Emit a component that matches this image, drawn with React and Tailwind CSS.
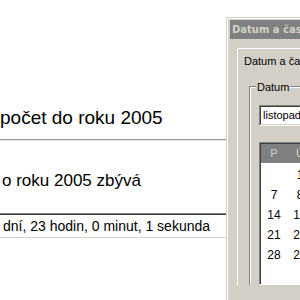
import React from "react";

const weeks = [
    ["", "1", "2"],
    ["7", "8", "9"],
    ["14", "15", "16"],
    ["21", "22", "23"],
    ["28", "29", "30"],
    ["", "", ""],
];

const dayNames = ["P", "Ú", "S", "Č", "P", "S", "N"];

const App = () => {
    return (
        <div className="w-[300px] h-[300px] overflow-hidden bg-white flex font-['Liberation_Sans',Arial,sans-serif] text-black">
            {/* countdown text */}
            <div className="w-[226px] shrink-0 flex flex-col">
                <p className="pt-[107px] text-[19px] leading-[22px] whitespace-nowrap">
                    počet do roku 2005
                </p>
                <div className="mt-[10px] h-[1px] bg-[#9a9a9a]" />
                <div className="h-[1px] bg-[#e6e6e6]" />
                <p className="mt-[30px] pl-[2px] text-[17px] leading-[20px] whitespace-nowrap">
                    o roku 2005 zbývá
                </p>
                <div className="mt-[22px] border-t border-[#808080]">
                    <div className="border-t border-b border-t-[#404040] border-b-[#d4d0c8]">
                        <p className="pl-[3px] h-[22px] text-[14px] leading-[22px] whitespace-nowrap">
                            dní, 23 hodin, 0 minut, 1 sekunda
                        </p>
                    </div>
                </div>
            </div>

            {/* Datum a čas dialog */}
            <div className="flex-1 min-w-0 overflow-hidden pt-[17px]">
                <div className="border-t border-l border-[#d4d0c8] h-full">
                    <div className="border-t border-l border-white bg-[#d4d0c8] pt-[1px] pl-[2px] h-full">
                        <div className="h-[19px] bg-[#808080] pl-[2px] font-['DejaVu_Sans',sans-serif] text-[10px] font-bold leading-[19px] text-[#d4d0c8] whitespace-nowrap">
                            Datum a čas – vlastnosti
                        </div>
                        <div className="pl-[7px] pt-[9px] text-[11px] whitespace-nowrap">
                            <div className="border-t border-l border-white w-[200px]">
                                <div className="pl-[6px] pt-[6px] leading-[13px]">Datum a čas</div>
                                <div className="pl-[11px] pt-[18px]">
                                    <div className="border-t border-l border-[#808080]">
                                        <div className="border-t border-l border-white">
                                            <div className="-mt-[7px] ml-[5px] w-fit px-[1px] bg-[#d4d0c8] leading-[13px]">
                                                Datum
                                            </div>
                                            <div className="mt-[11px] ml-[8px] border-t border-l border-b border-t-[#808080] border-l-[#808080] border-b-white">
                                                <div className="border-t border-l border-b border-t-[#404040] border-l-[#404040] border-b-[#d4d0c8] bg-white h-[19px] pl-[2px] leading-[17px]">
                                                    listopad
                                                </div>
                                            </div>
                                            <div className="mt-[16px] ml-[8px] border-t border-l border-b border-t-[#808080] border-l-[#808080] border-b-white">
                                                <div className="border-t border-l border-t-[#404040] border-l-[#404040]">
                                                    <div className="flex h-[19px] bg-[#808080] text-[#d4d0c8] leading-[19px]">
                                                        {dayNames.map((d, i) => (
                                                            <div key={i} className="w-[26px] shrink-0 text-center">{d}</div>
                                                        ))}
                                                    </div>
                                                    <div className="bg-white pt-[2px] h-[121px] text-[12px]">
                                                        {weeks.map((week, i) => (
                                                            <div key={i} className="flex h-[20px] leading-[20px]">
                                                                {week.map((day, j) => (
                                                                    <div key={j} className="w-[26px] shrink-0 text-center">{day}</div>
                                                                ))}
                                                            </div>
                                                        ))}
                                                    </div>
                                                </div>
                                            </div>
                                        </div>
                                    </div>
                                </div>
                            </div>
                        </div>
                    </div>
                </div>
            </div>
        </div>
    );
};

export default App;
